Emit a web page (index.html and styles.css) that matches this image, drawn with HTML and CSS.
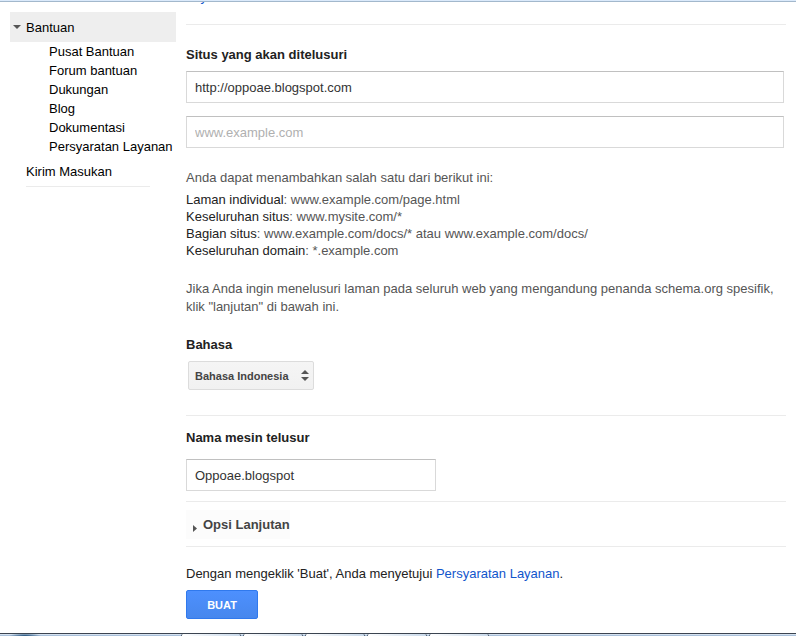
FILE: index.html
```
<!DOCTYPE html>
<html lang="id">
<head>
  <meta charset="UTF-8">
  <meta name="viewport" content="width=device-width, initial-scale=1.0">
  <title>Mesin Telusur Khusus</title>
  <link rel="stylesheet" href="styles.css">
</head>
<body>
  <div class="window-edge"></div>

  <div class="page">
    <nav class="sidebar">
      <button type="button" class="nav-toggle">
        <svg class="arrow-down" viewBox="0 0 8 4"><path d="M0 0h8L4 4z"/></svg>
        Bantuan
      </button>
      <ul class="nav-sub">
        <li><a href="#">Pusat Bantuan</a></li>
        <li><a href="#">Forum bantuan</a></li>
        <li><a href="#">Dukungan</a></li>
        <li><a href="#">Blog</a></li>
        <li><a href="#">Dokumentasi</a></li>
        <li><a href="#">Persyaratan Layanan</a></li>
      </ul>
      <a class="nav-feedback" href="#">Kirim Masukan</a>
    </nav>

    <form class="content">
      <!-- scrolled under the window edge -->
      <a class="scrolled-link" href="#">Layanan</a>

      <section class="section sites">
        <label class="heading" for="site">Situs yang akan ditelusuri</label>
        <input class="text-box" type="text" id="site" value="http://oppoae.blogspot.com">
        <input class="text-box" type="text" aria-label="Situs" placeholder="www.example.com">
        <p class="hint">Anda dapat menambahkan salah satu dari berikut ini:</p>
        <ul class="examples">
          <li><b>Laman individual</b>: www.example.com/page.html</li>
          <li><b>Keseluruhan situs</b>: www.mysite.com/*</li>
          <li><b>Bagian situs</b>: www.example.com/docs/* atau www.example.com/docs/</li>
          <li><b>Keseluruhan domain</b>: *.example.com</li>
        </ul>
        <p class="hint schema">Jika Anda ingin menelusuri laman pada seluruh web yang mengandung penanda schema.org spesifik, klik "lanjutan" di bawah ini.</p>
        <label class="heading" for="language">Bahasa</label>
        <div class="select-wrap">
          <select id="language">
            <option>Bahasa Indonesia</option>
          </select>
          <svg class="arrows" viewBox="0 0 8 11"><path d="M0 4h8L4 0zM0 7h8l-4 4z"/></svg>
        </div>
      </section>

      <section class="section name">
        <label class="heading" for="name">Nama mesin telusur</label>
        <input class="text-box short" type="text" id="name" value="Oppoae.blogspot">
      </section>

      <section class="section advanced">
        <button type="button" class="advanced-toggle">
          <svg class="arrow-right" viewBox="0 0 4 7"><path d="M0 0v7l4-3.500z"/></svg>
          Opsi Lanjutan
        </button>
      </section>

      <section class="section submit">
        <p>Dengan mengeklik 'Buat', Anda menyetujui <a href="#">Persyaratan Layanan</a>.</p>
        <button type="submit" class="create">BUAT</button>
      </section>
    </form>
  </div>

  <div class="taskbar">
    <div class="start"></div>
    <span class="task"></span>
    <span class="task"></span>
    <span class="task"></span>
    <span class="task"></span>
    <span class="task"></span>
  </div>
</body>
</html>
```
FILE: styles.css
```
* {
  box-sizing: border-box;
}

body {
  margin: 0;
  height: 100vh;
  display: flex;
  flex-direction: column;
  overflow: hidden;
  background: #fff;
  color: #222;
  font-family: "Liberation Sans", Arial, sans-serif;
  font-size: 13px;
  line-height: 17px;
}

p,
ul {
  margin: 0;
  padding: 0;
  list-style: none;
}

a {
  color: #15c;
  text-decoration: none;
}

input,
select,
button {
  font-family: inherit;
  font-size: 13px;
}

svg {
  fill: #555;
}

.window-edge {
  flex: none;
  height: 2px;
  background: #dbeafb;
  border-bottom: 1px solid #a3b8cc;
}

.page {
  flex: 1;
  min-height: 0;
  display: flex;
  gap: 10px;
  padding: 0 10px;
  overflow: hidden;
}

/* Left menu */
.sidebar {
  flex: none;
  width: 166px;
  padding-top: 10px;
}

.sidebar a {
  color: #000;
}

.nav-toggle {
  display: flex;
  align-items: center;
  gap: 5px;
  width: 100%;
  height: 30px;
  padding: 0 3px;
  border: 0;
  background: #eee;
  color: #000;
}

.arrow-down {
  width: 8px;
  height: 4px;
}

.nav-sub {
  padding-left: 39px;
  line-height: 19px;
  white-space: nowrap;
}

.nav-feedback {
  display: block;
  width: 124px;
  margin: 7px 0 0 16px;
  padding-bottom: 6px;
  border-bottom: 1px solid #ebebeb;
}

/* Form */
.content {
  flex: 1;
}

.scrolled-link {
  display: block;
  margin: -14px 0 19px;
}

.section {
  border-top: 1px solid #ebebeb;
}

.heading {
  display: block;
  font-weight: bold;
}

.text-box {
  display: block;
  width: calc(100% - 2px);
  height: 32px;
  padding: 0 8px;
  border: 1px solid #d9d9d9;
  border-top-color: #c0c0c0;
  color: #333;
}

.text-box::placeholder {
  color: #b0b0b0;
}

.short {
  width: 250px;
}

.sites {
  padding: 21px 0 25px;
}

.sites .text-box {
  margin: 8px 0 13px;
}

.hint {
  margin-top: 21px;
  color: #555;
  line-height: 18px;
}

.examples {
  margin-top: 4px;
  color: #555;
}

.examples b {
  color: #222;
  font-weight: normal;
}

.schema {
  margin: 21px 0 20px;
}

.select-wrap {
  position: relative;
  width: 126px;
  margin: 8px 2px 0;
}

.select-wrap select {
  display: block;
  width: 100%;
  height: 29px;
  padding: 0 6px;
  appearance: none;
  border: 1px solid #dcdcdc;
  border-radius: 2px;
  background: linear-gradient(#f5f5f5, #f1f1f1);
  color: #444;
  font-size: 11px;
  font-weight: bold;
}

.arrows {
  position: absolute;
  top: 9px;
  right: 5px;
  width: 8px;
  height: 11px;
  pointer-events: none;
}

.name {
  padding: 13px 0 10px;
}

.name .text-box {
  margin-top: 13px;
}

.advanced {
  padding: 8px 0 7px;
}

.advanced-toggle {
  display: flex;
  align-items: center;
  gap: 6px;
  height: 29px;
  padding: 0 0 0 7px;
  border: 0;
  background: #fcfcfc;
  color: #444;
  font-weight: bold;
}

.arrow-right {
  width: 4px;
  height: 7px;
  margin-top: 7px;
}

.submit {
  padding-top: 18px;
}

.create {
  display: block;
  width: 72px;
  height: 29px;
  margin-top: 8px;
  padding: 0;
  border: 1px solid #3079ed;
  border-radius: 2px;
  background: linear-gradient(#4d90fe, #4787ed);
  color: #fff;
  font-size: 11px;
  font-weight: bold;
}

/* Top of the taskbar */
.taskbar {
  flex: none;
  display: flex;
  gap: 2px;
  height: 3px;
  border-top: 1px solid #3b4450;
  background: linear-gradient(#d5e2f0 50%, #a9c0da 50%);
}

.start {
  width: 179px;
  background: radial-gradient(ellipse 16px 3px at 25px 2px, #1f4f7a, transparent);
}

.task {
  width: 60px;
  height: 2px;
  border: 1px solid #4a5766;
  border-width: 0 1px;
  border-radius: 2px 2px 0 0;
  background: linear-gradient(90deg, #fff, #c9d9ea);
}
```
